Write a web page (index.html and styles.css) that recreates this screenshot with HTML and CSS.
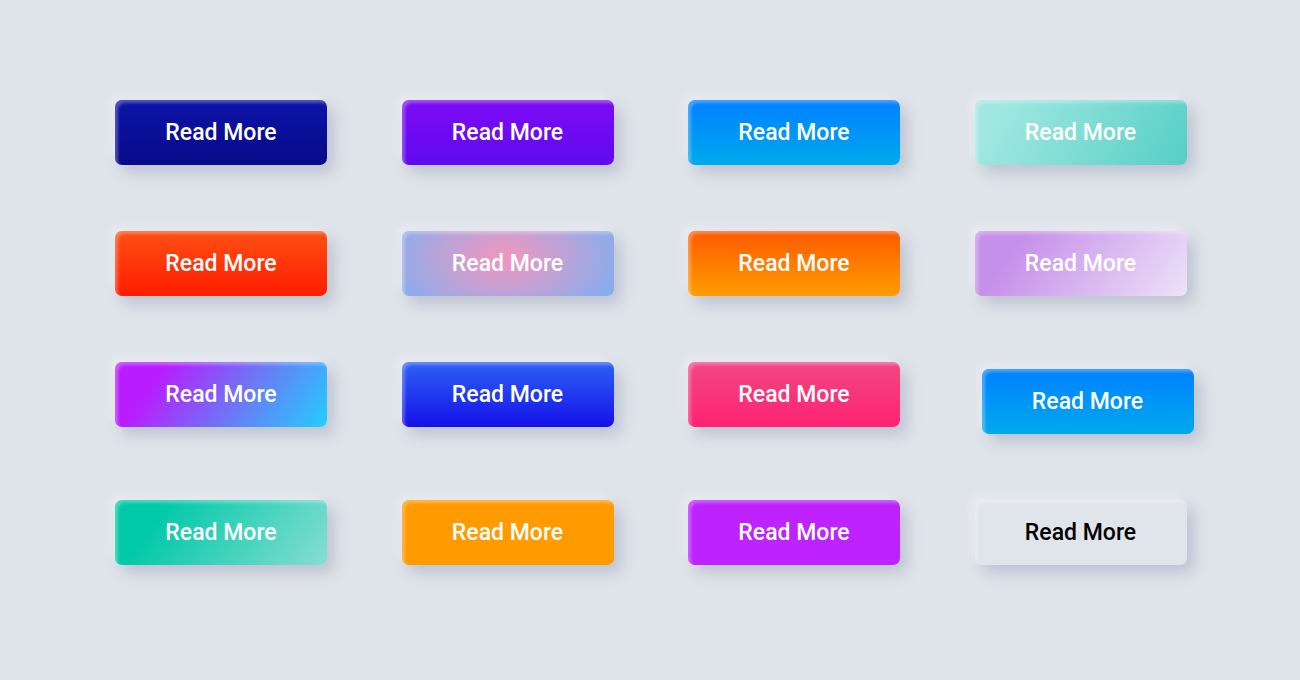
FILE: index.html
```html
<!DOCTYPE html>
<html lang="en">
<head>
    <meta charset="utf-8">
    <title>Read More Buttons</title>
    <link rel="stylesheet" href="styles.css">
</head>
<body>

<div id="board">
    <!-- row 1 -->
    <div class="row">
        <button class="btn navy">Read More</button>
        <button class="btn violet">Read More</button>
        <button class="btn sky">Read More</button>
        <button class="btn mint">Read More</button>
    </div>

    <!-- row 2 -->
    <div class="row">
        <button class="btn fire">Read More</button>
        <button class="btn candy">Read More</button>
        <button class="btn sunset">Read More</button>
        <button class="btn lilac">Read More</button>
    </div>

    <!-- row 3 (last one is pressed) -->
    <div class="row">
        <button class="btn neon">Read More</button>
        <button class="btn royal">Read More</button>
        <button class="btn rose">Read More</button>
        <button class="btn sky pressed">Read More</button>
    </div>

    <!-- row 4 -->
    <div class="row">
        <button class="btn sea">Read More</button>
        <button class="btn amber">Read More</button>
        <button class="btn grape">Read More</button>
        <button class="btn plain">Read More</button>
    </div>
</div>

</body>
</html>
```

FILE: styles.css
```css
html, body {
    margin: 0;
    padding: 0;
    min-height: 100%;
    background-color: #dfe3ea;
}

body {
    font-family: Roboto, "Liberation Sans", Arial, sans-serif;
    min-height: 100vh;
}

#board {
    display: flex;
    flex-direction: column;
    gap: 66px;
    padding: 100px 0 100px 115px;
}

.row {
    display: flex;
    align-items: flex-start;
    gap: 74.5px;
}

.btn {
    width: 212px;
    height: 65px;
    border: none;
    border-radius: 7px;
    font-family: inherit;
    font-size: 23px;
    font-weight: 500;
    color: #fff;
    cursor: pointer;
    box-shadow:
        inset 3px 3px 3px rgba(255, 255, 255, 0.28),
        7px 8px 14px rgba(150, 160, 180, 0.45),
        -5px -5px 10px rgba(255, 255, 255, 0.35);
}

/* the one that looks pushed */
.btn.pressed {
    margin-left: 7px;
    margin-top: 7px;
}

.navy   { background: linear-gradient(#0d14a8, #070a8a); }
.violet { background: linear-gradient(#7e0af4, #5e0aee); }
.sky    { background: linear-gradient(#0080ff, #00a9ee); }
.mint   { background: linear-gradient(120deg, #a2e8e2 10%, #55cfc5 100%); }

.fire   { background: linear-gradient(#ff5014, #ff1c00); }
.candy  { background: radial-gradient(ellipse 60% 120% at 48% 40%, #f096bc 0%, #c0a2d6 45%, #80aef0 100%); }
.sunset { background: linear-gradient(#ff5a00, #ff9c00); }
.lilac  { background: linear-gradient(125deg, #c690ea 20%, #ede2f8 100%); }

.neon   { background: linear-gradient(125deg, #b91cff 20%, #6a7af5 60%, #22ceff 100%); }
.royal  { background: linear-gradient(#2d62f2, #1510ea); }
.rose   { background: linear-gradient(#f04882, #ff2272); }

.sea    { background: linear-gradient(125deg, #00c9a7 20%, #86ddd3 100%); }
.amber  { background: #ff9a00; }
.grape  { background: #bd22ff; }
.plain  { background: #e0e4eb; color: #000; }
```
